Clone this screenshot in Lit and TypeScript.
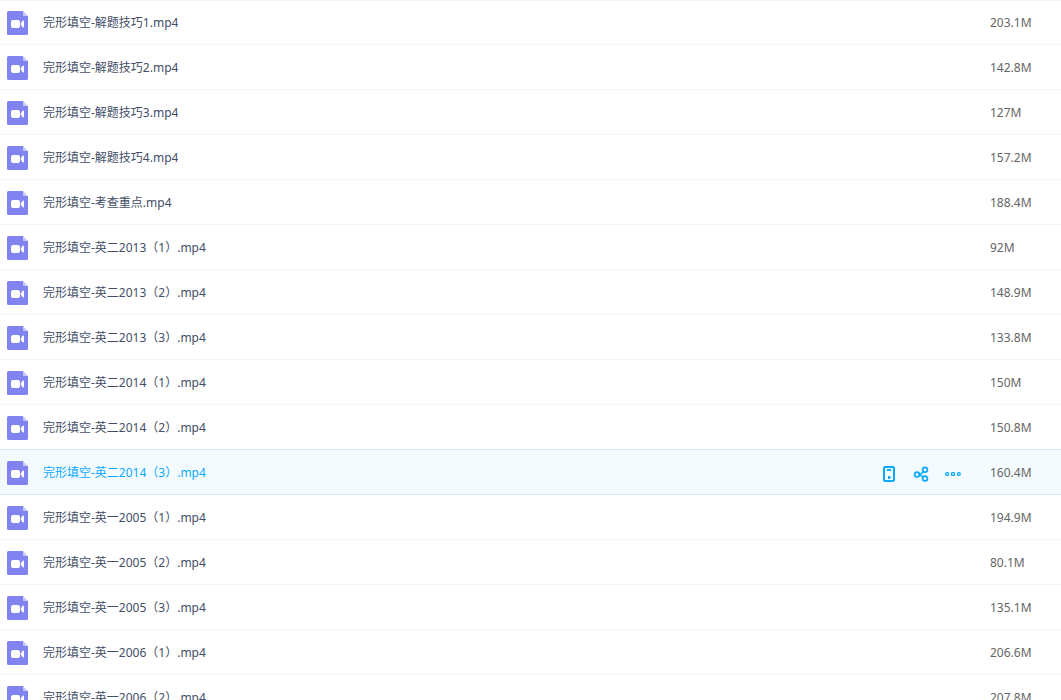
import { LitElement, html, css, svg } from "lit";
import { customElement, state } from "lit/decorators.js";
import { classMap } from "lit/directives/class-map.js";

interface FileEntry {
  name: string;
  size: string;
}

const files: FileEntry[] = [
  { name: "完形填空-解题技巧1.mp4", size: "203.1M" },
  { name: "完形填空-解题技巧2.mp4", size: "142.8M" },
  { name: "完形填空-解题技巧3.mp4", size: "127M" },
  { name: "完形填空-解题技巧4.mp4", size: "157.2M" },
  { name: "完形填空-考查重点.mp4", size: "188.4M" },
  { name: "完形填空-英二2013（1）.mp4", size: "92M" },
  { name: "完形填空-英二2013（2）.mp4", size: "148.9M" },
  { name: "完形填空-英二2013（3）.mp4", size: "133.8M" },
  { name: "完形填空-英二2014（1）.mp4", size: "150M" },
  { name: "完形填空-英二2014（2）.mp4", size: "150.8M" },
  { name: "完形填空-英二2014（3）.mp4", size: "160.4M" },
  { name: "完形填空-英一2005（1）.mp4", size: "194.9M" },
  { name: "完形填空-英一2005（2）.mp4", size: "80.1M" },
  { name: "完形填空-英一2005（3）.mp4", size: "135.1M" },
  { name: "完形填空-英一2006（1）.mp4", size: "206.6M" },
  { name: "完形填空-英一2006（2）.mp4", size: "207.8M" },
];

const videoIcon = html`<svg class="file-icon" width="21" height="24" viewBox="0 0 21 24" aria-hidden="true">
  <path d="M1.500 0H16L21 5V22.500Q21 24 19.500 24H1.500Q0 24 0 22.500V1.500Q0 0 1.500 0Z" fill="#8183f1" />
  <path d="M16 0L21 5H17Q16 5 16 4Z" fill="#c9caf9" />
  <path d="M16 0H21V5Z" fill="#fff" />
  <rect x="4" y="9" width="9" height="8" rx="2" fill="#fff" />
  <path d="M13.500 13L15.500 9.800Q17 9 17 10.500V15.500Q17 17 15.500 16.200Z" fill="#fff" />
</svg>`;

const deviceGlyph = svg`
  <rect x="3" y="1" width="10" height="14" rx="1" fill="none" stroke="currentColor" stroke-width="2" />
  <path d="M6 3H10V5H6ZM7 10H9V11H10V12H9V13H7Z" fill="currentColor" />`;

const shareGlyph = svg`
  <g fill="none" stroke="currentColor" stroke-width="1.700">
    <circle cx="4" cy="8.500" r="2.400" />
    <circle cx="12" cy="3.800" r="2.400" />
    <circle cx="12" cy="12.500" r="2.400" />
    <path d="M6.200 8.500Q9 8 10 5.500M7 8.500L10 11.500" />
  </g>`;

const moreGlyph = svg`
  <g fill="none" stroke="currentColor" stroke-width="1.300">
    <rect x="0.800" y="6.700" width="2.700" height="2.700" rx="1.200" />
    <rect x="6.600" y="6.700" width="2.800" height="2.700" rx="0.500" />
    <rect x="12.500" y="6.700" width="2.700" height="2.700" rx="1.200" />
  </g>`;

const actions = [
  { label: "下载", glyph: deviceGlyph },
  { label: "分享", glyph: shareGlyph },
  { label: "更多", glyph: moreGlyph },
];

@customElement("app-root")
export class AppRoot extends LitElement {
  @state() private active = 10;

  static styles = css`
    :host {
      display: block;
      height: 100vh;
      overflow: hidden;
      background: #fff;
      font: 12px/18px "Noto Sans", "Noto Sans CJK SC", sans-serif;
      color: #424e67;
    }
    .files {
      width: 100%;
      border-collapse: separate;
      border-spacing: 0;
      table-layout: fixed;
    }
    .name-col {
      width: auto;
    }
    .actions-col {
      width: 117px;
    }
    .size-col {
      width: 71px;
    }
    .row {
      height: 45px;
    }
    .cell {
      padding: 2px 0 0;
      border-bottom: 1px solid #f2f6fd;
      vertical-align: middle;
      text-align: left;
    }
    .row:first-child .cell {
      padding-top: 1px;
      border-top: 1px solid #f2f6fd;
    }
    .active .cell {
      background: #f4fbff;
    }
    .active .cell,
    .before-active .cell {
      border-bottom-color: #d6e9fa;
    }
    .entry {
      display: flex;
      align-items: center;
      gap: 15px;
      padding-left: 7px;
    }
    .file-icon {
      flex: none;
      display: block;
    }
    .name {
      color: inherit;
      text-decoration: none;
      white-space: nowrap;
      overflow: hidden;
      text-overflow: ellipsis;
    }
    .active .name {
      color: #09aaff;
    }
    .tools {
      display: flex;
      padding-top: 2px;
    }
    .tool {
      display: flex;
      align-items: center;
      justify-content: center;
      width: 32px;
      height: 24px;
      padding: 0;
      border: 0;
      background: none;
      color: #09aaff;
      cursor: pointer;
    }
    .size {
      color: #666;
    }
  `;

  private select(event: Event, index: number) {
    event.preventDefault();
    this.active = index;
  }

  render() {
    return html`
      <table class="files">
        <colgroup>
          <col class="name-col" />
          <col class="actions-col" />
          <col class="size-col" />
        </colgroup>
        <tbody>
          ${files.map(
            (file, i) => html`
              <tr
                class=${classMap({
                  row: true,
                  active: i === this.active,
                  "before-active": i === this.active - 1,
                })}
              >
                <td class="cell">
                  <div class="entry">
                    ${videoIcon}<a class="name" href="#" @click=${(e: Event) => this.select(e, i)}>${file.name}</a>
                  </div>
                </td>
                <td class="cell">
                  ${i === this.active
                    ? html`<div class="tools">
                        ${actions.map(
                          (action) => html`<button class="tool" type="button" aria-label=${action.label}>
                            <svg width="16" height="16" viewBox="0 0 16 16" aria-hidden="true">${action.glyph}</svg>
                          </button>`
                        )}
                      </div>`
                    : null}
                </td>
                <td class="cell size">${file.size}</td>
              </tr>
            `
          )}
        </tbody>
      </table>
    `;
  }
}
